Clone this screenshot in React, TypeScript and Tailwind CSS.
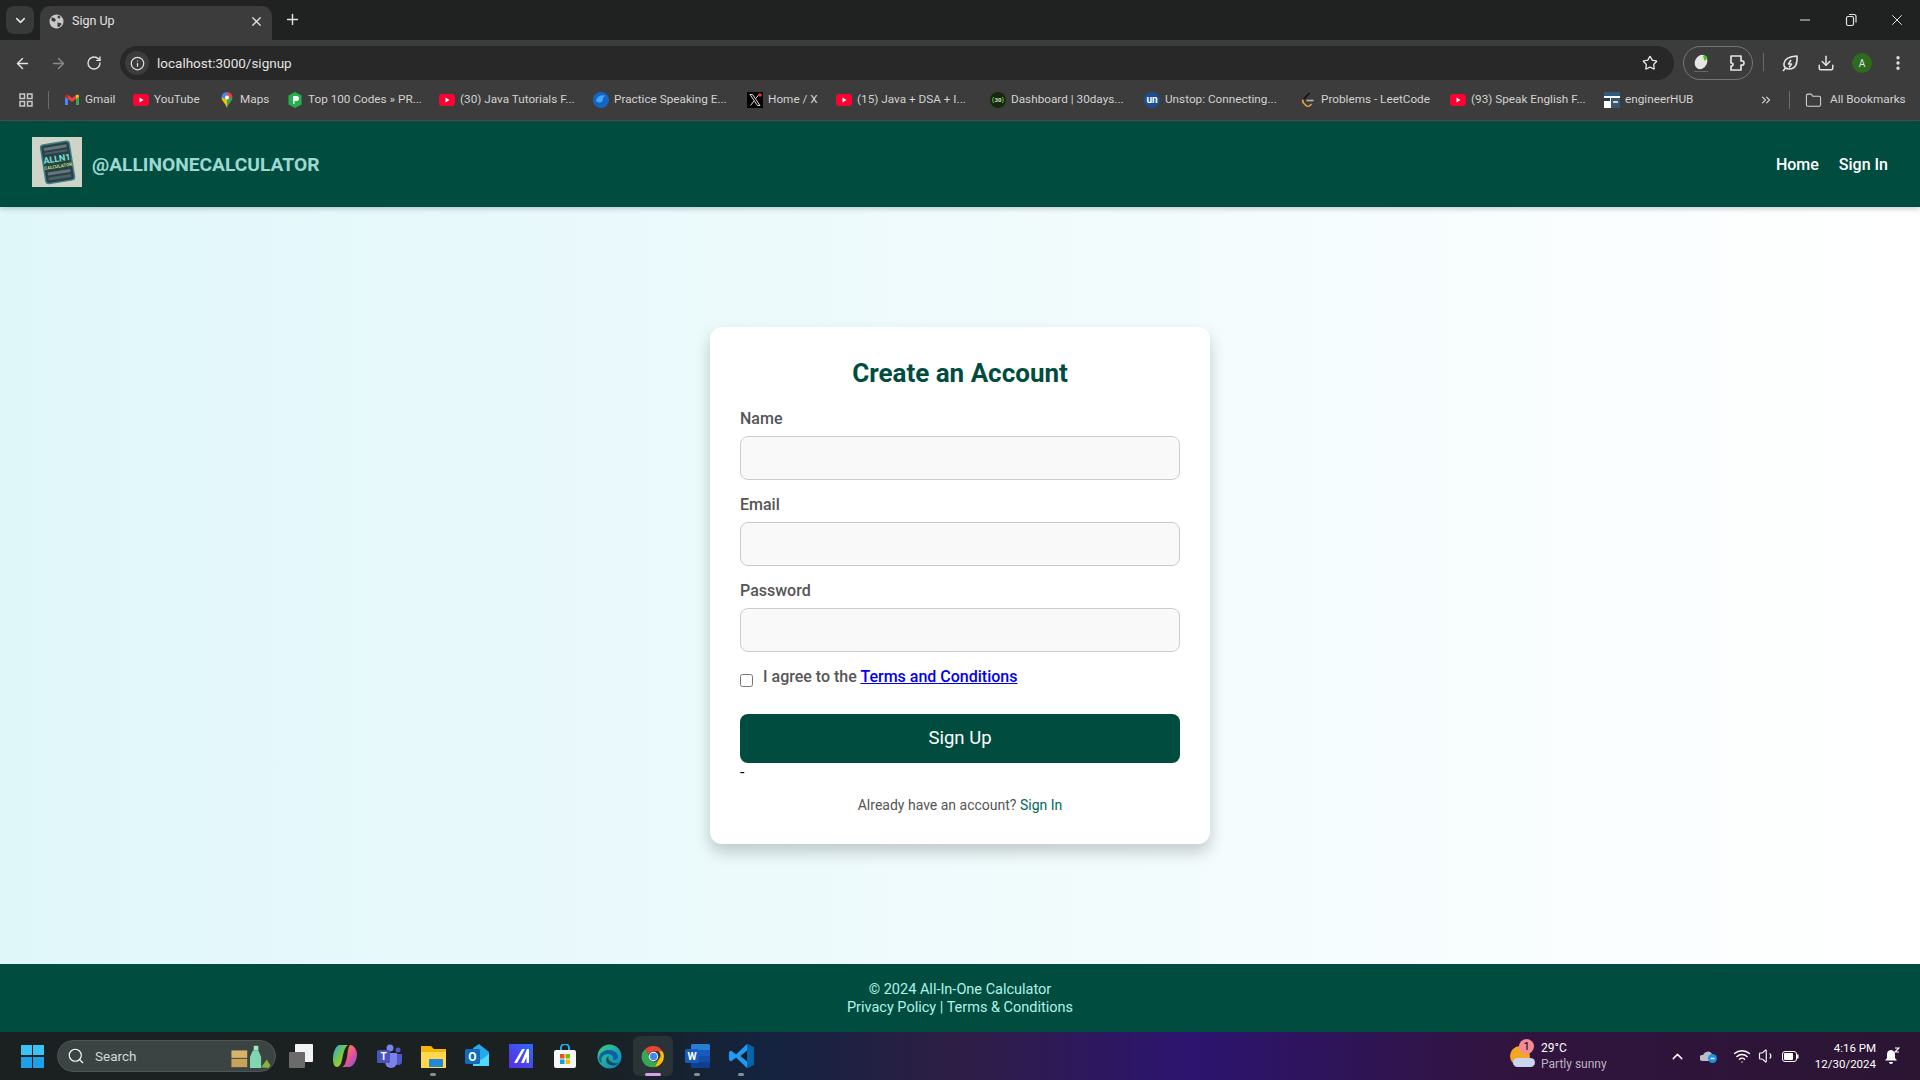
import {
  ArrowLeft,
  ArrowRight,
  ChevronDown,
  ChevronUp,
  ChevronsRight,
  Download,
  EllipsisVertical,
  Folder,
  Info,
  Minus,
  Plus,
  RotateCw,
  Search,
  Star,
  Volume1,
  Wifi,
  X,
} from "lucide-react"
import type { ReactNode } from "react"

function YouTubeIcon() {
  return (
    <svg width="16" height="16" viewBox="0 0 16 16">
      <rect x="0" y="2" width="16" height="12" rx="3" fill="#ff0033" />
      <path d="M6.500 5.600v4.800L10.500 8z" fill="#fff" />
    </svg>
  )
}

function GmailIcon() {
  return (
    <svg width="16" height="16" viewBox="0 0 16 16">
      <path d="M1 4v9h3V7z" fill="#4285f4" />
      <path d="M15 4v9h-3V7z" fill="#34a853" />
      <path d="M4 7l4 3 4-3V3L8 6 4 3z" fill="#ea4335" />
      <path d="M1 4c0-1.200 1.600-1.800 3-1v4L1 4.800z" fill="#c5221f" />
      <path d="M15 4c0-1.200-1.600-1.800-3-1v4l3-2.200z" fill="#fbbc04" />
    </svg>
  )
}

function MapsIcon() {
  return (
    <svg width="16" height="16" viewBox="0 0 16 16">
      <path d="M8 0a5.500 5.500 0 0 0-5.500 5.500L8 8z" fill="#4285f4" />
      <path d="M8 0a5.500 5.500 0 0 1 5.500 5.500L8 8z" fill="#ea4335" />
      <path d="M2.500 5.500C2.500 9 6.500 11 8 16l1-8z" fill="#fbbc04" />
      <path d="M13.500 5.500C13.500 9 9.500 11 8 16V6z" fill="#34a853" />
      <circle cx="8" cy="5.500" r="2" fill="#fff" />
    </svg>
  )
}

function TopCodesIcon() {
  return (
    <svg width="16" height="16" viewBox="0 0 16 16">
      <path d="M8 0l6.500 3.500v9L8 16l-6.500-3.500v-9z" fill="#22b14c" />
      <path d="M6 4h3.500a2.500 2.500 0 0 1 0 5H7.500v3H6z" fill="#fff" />
    </svg>
  )
}

function PracticeIcon() {
  return (
    <svg width="16" height="16" viewBox="0 0 16 16">
      <circle cx="8" cy="8" r="8" fill="#1565c0" />
      <path d="M3 9c1-5 6-7 10-5-2 0-3 1-3 3 0 3-3 5-7 2z" fill="#42a5f5" />
    </svg>
  )
}

function XIcon() {
  return (
    <svg width="16" height="16" viewBox="0 0 16 16">
      <rect width="16" height="16" fill="#000" />
      <path d="M3 2.500h2.500l7.500 11h-2.500zM12 2.500L8.700 6.500M7 9l-3.500 4.500" stroke="#ddd" strokeWidth="1" fill="none" />
      <circle cx="13" cy="3" r="1.800" fill="#e33" />
    </svg>
  )
}

function ThirtyDaysIcon() {
  return (
    <svg width="16" height="16" viewBox="0 0 16 16">
      <circle cx="8" cy="8" r="8" fill="#15290f" />
      <text x="8" y="10" fontSize="6" fontWeight="700" fill="#cde8c0" textAnchor="middle" fontFamily="Roboto">30</text>
      <path d="M3.500 5c-1 2-1 4 0 6M12.500 5c1 2 1 4 0 6" stroke="#6cc04a" fill="none" />
    </svg>
  )
}

function UnstopIcon() {
  return (
    <div className="flex h-4 w-4 items-center justify-center rounded-full bg-[#1f4e8c] text-[10px] font-bold leading-none text-white">
      un
    </div>
  )
}

function LeetCodeIcon() {
  return (
    <svg width="16" height="16" viewBox="0 0 16 16" fill="none">
      <path d="M3.500 7.500c-1 1.200-1 2.500 0 3.500l2.500 2.500c1 1 3 1 4 0l1.500-1.500" stroke="#e8a33d" strokeWidth="1.600" />
      <path d="M9.500 1L3.500 7.500" stroke="#111" strokeWidth="1.600" />
      <path d="M6.500 8.500h7" stroke="#b8b8b8" strokeWidth="1.600" />
    </svg>
  )
}

function EngineerHubIcon() {
  return (
    <svg width="16" height="16" viewBox="0 0 16 16">
      <rect width="16" height="16" fill="#fff" />
      <rect x="0" y="0" width="16" height="4" fill="#33597a" />
      <rect x="0" y="6" width="6" height="3" fill="#1d3a52" />
      <rect x="7" y="6" width="9" height="10" fill="#38566e" />
      <rect x="9" y="9" width="5" height="2" fill="#c7d3dc" />
    </svg>
  )
}

const bookmarks = [
  { icon: <GmailIcon />, label: "Gmail", width: "w-[69px]" },
  { icon: <YouTubeIcon />, label: "YouTube", width: "w-[86px]" },
  { icon: <MapsIcon />, label: "Maps", width: "w-[68px]" },
  { icon: <TopCodesIcon />, label: "Top 100 Codes » PR...", width: "w-[152px]" },
  { icon: <YouTubeIcon />, label: "(30) Java Tutorials F...", width: "w-[154px]" },
  { icon: <PracticeIcon />, label: "Practice Speaking E...", width: "w-[154px]" },
  { icon: <XIcon />, label: "Home / X", width: "w-[89px]" },
  { icon: <YouTubeIcon />, label: "(15) Java + DSA + I...", width: "w-[154px]" },
  { icon: <ThirtyDaysIcon />, label: "Dashboard | 30days...", width: "w-[154px]" },
  { icon: <UnstopIcon />, label: "Unstop: Connecting...", width: "w-[156px]" },
  { icon: <LeetCodeIcon />, label: "Problems - LeetCode", width: "w-[150px]" },
  { icon: <YouTubeIcon />, label: "(93) Speak English F...", width: "w-[154px]" },
  { icon: <EngineerHubIcon />, label: "engineerHUB", width: "w-[155px]" },
]

function BrowserChrome() {
  return (
    <div className="bg-[#3c3c3c] text-[#e3e3e3]">
      {/* tab strip */}
      <div className="flex h-10 items-end bg-[#202221] pl-1.5">
        <div className="mb-1.5 flex h-7 w-7 items-center justify-center rounded-lg bg-[#383a3a]">
          <ChevronDown size={15} strokeWidth={2.500} />
        </div>
        <div className="ml-1.5 flex h-[34px] w-[232px] items-center rounded-t-[10px] bg-[#3c3c3c] pb-1 pl-[9px] pr-2">
          <GlobeIcon />
          <span className="ml-2 flex-1 text-[12.500px]">Sign Up</span>
          <X size={15} strokeWidth={2} />
        </div>
        <div className="mb-[7px] ml-1.5 flex h-7 w-7 items-center justify-center">
          <Plus size={17} strokeWidth={2} />
        </div>
        <div className="ml-auto flex h-10 items-center">
          <div className="flex w-[46px] justify-center"><Minus size={16} strokeWidth={1.500} /></div>
          <div className="flex w-[46px] justify-center"><RestoreIcon /></div>
          <div className="flex w-[46px] justify-center"><X size={18} strokeWidth={1.300} /></div>
        </div>
      </div>

      {/* toolbar */}
      <div className="flex h-10 items-end pl-3.5 pr-3">
        <div className="flex h-[34px] items-center gap-[19px] text-[#e3e3e3]">
          <ArrowLeft size={17} strokeWidth={2} />
          <ArrowRight size={17} strokeWidth={2} className="text-[#8a8a8a]" />
          <RotateCw size={16} strokeWidth={2} />
        </div>
        <div className="ml-[18px] flex h-[34px] w-[1554px] items-center rounded-full bg-[#282828] pl-[5px] pr-4">
          <div className="flex h-6 w-6 items-center justify-center rounded-full bg-[#3c3c3c]">
            <Info size={15} />
          </div>
          <span className="ml-2 flex-1 text-[13.500px]">localhost:3000/signup</span>
          <Star size={16} strokeWidth={2} />
        </div>
        <div className="ml-[9px] flex h-[34px] w-[70px] items-center justify-between rounded-full border border-[#757575] pl-[9px] pr-1.5">
          <MouseIcon />
          <PuzzleIcon />
        </div>
        <div className="mb-[9px] ml-2.5 h-[18px] w-px bg-[#6a6a6a]" />
        <div className="flex h-[34px] items-center">
          <div className="ml-[17px]"><LeafIcon /></div>
          <Download size={18} strokeWidth={2} className="ml-[18px]" />
          <div className="ml-[17px] flex h-5 w-5 items-center justify-center rounded-full bg-[#2f6b1f] text-[10px]">A</div>
          <EllipsisVertical size={18} strokeWidth={2.500} className="ml-[17px]" />
        </div>
      </div>

      {/* bookmarks bar */}
      <div className="flex h-[41px] items-center border-b border-[#4d4d4d] pl-[19px] text-[11.750px] text-[#d2d2d2]">
        <AppsIcon />
        <div className="ml-[15px] mr-[15px] h-[18px] w-px bg-[#6a6a6a]" />
        {bookmarks.map((b) => (
          <div key={b.label + b.width} className={`flex items-center gap-[5px] ${b.width}`}>
            <span className="flex h-4 w-4 items-center justify-center">{b.icon}</span>
            <span className="whitespace-nowrap">{b.label}</span>
          </div>
        ))}
        <ChevronsRight size={14} />
        <div className="ml-[16px] mr-[15px] h-[18px] w-px bg-[#6a6a6a]" />
        <Folder size={17} strokeWidth={1.500} />
        <span className="ml-2 whitespace-nowrap">All Bookmarks</span>
      </div>
    </div>
  )
}

function GlobeIcon() {
  return (
    <svg width="15" height="15" viewBox="0 0 16 16">
      <circle cx="8" cy="8" r="7.500" fill="#c7c7c7" />
      <path d="M3 3.500l3 1 1.500 2-2 2-3-1.500zM9 9l3 .5 1.500 1-2.500 3.500-2-1zM9.500 1.500l3 1.500-1.500 2-2-1z" fill="#3c3c3c" />
    </svg>
  )
}

function RestoreIcon() {
  return (
    <svg width="14" height="14" viewBox="0 0 14 14" fill="none" stroke="#e3e3e3" strokeWidth="1.200">
      <rect x="2.500" y="3.500" width="7" height="9" rx="1.500" />
      <path d="M5 1.500h5a2 2 0 0 1 2 2v6" />
    </svg>
  )
}

function MouseIcon() {
  return (
    <svg width="18" height="20" viewBox="0 0 18 20">
      <ellipse cx="8" cy="9" rx="6" ry="7.500" transform="rotate(25 8 9)" fill="#e6e6e6" />
      <path d="M10 3c2-1 4 0 4.500 2l-3 3z" fill="#3ecb12" />
      <path d="M1 18.500h14" stroke="#666" />
    </svg>
  )
}

function PuzzleIcon() {
  return (
    <svg width="18" height="18" viewBox="0 0 18 18" fill="none" stroke="#e3e3e3" strokeWidth="1.700" strokeLinejoin="round">
      <path d="M3 2h10v5c2-.5 3 .5 3 2s-1 2.500-3 2v5H3v-4c1.500 0 2-1 2-1.500S4.500 9 3 9z" />
    </svg>
  )
}

function LeafIcon() {
  return (
    <svg width="18" height="18" viewBox="0 0 18 18" fill="none" stroke="#e3e3e3" strokeWidth="1.600" strokeLinejoin="round">
      <path d="M16 2c.5 7-1 13-8 13-3.500 0-5.500-2.500-5-5.500C3.500 5 9 2.500 16 2z" />
      <path d="M2 17l2.500-3M10 6L7.500 10h3l-2.500 3.500" />
    </svg>
  )
}

function AppsIcon() {
  return (
    <svg width="14" height="14" viewBox="0 0 14 14" fill="none" stroke="#c7c7c7" strokeWidth="1.500">
      <rect x="1" y="1" width="4.500" height="4.500" />
      <rect x="8.500" y="1" width="4.500" height="4.500" />
      <rect x="1" y="8.500" width="4.500" height="4.500" />
      <rect x="8.500" y="8.500" width="4.500" height="4.500" />
    </svg>
  )
}

function Logo() {
  return (
    <svg width="50" height="50" viewBox="0 0 50 50" className="mb-1 shrink-0">
      <rect width="50" height="50" fill="#cfd4c8" />
      <g transform="rotate(-9 25 25)">
        <rect x="11" y="6" width="29" height="39" rx="3" fill="#2a3f46" stroke="#3e7f8a" strokeWidth="1.500" />
        <rect x="14" y="9" width="23" height="3" fill="#62787c" />
        <rect x="14" y="14" width="23" height="2" fill="#4b6064" />
        <text x="25.500" y="25" fontSize="9" fontWeight="700" fill="#6fe7d2" textAnchor="middle" fontFamily="Roboto">ALLN1</text>
        <text x="25.500" y="31" fontSize="4.500" fontWeight="700" fill="#b9e37a" textAnchor="middle" fontFamily="Roboto">CALCULATOR</text>
        <rect x="14" y="34" width="23" height="3" fill="#62787c" />
        <rect x="14" y="39" width="23" height="3" fill="#4b6064" />
      </g>
    </svg>
  )
}

function TaskIcon({ children, dot }: { children: ReactNode; dot?: boolean }) {
  return (
    <div className="relative flex h-10 w-11 items-center justify-center">
      {children}
      {dot && <div className="absolute bottom-0 h-[3px] w-[6px] rounded-full bg-[#8a8f92]" />}
    </div>
  )
}

function Taskbar() {
  return (
    <div className="flex h-12 items-center bg-[linear-gradient(90deg,#1b2120_0%,#1b2120_30%,#14233f_40%,#2e1e45_50%,#2c1470_62%,#31143f_78%,#2b1533_100%)] text-white">
      <div className="ml-[21px] grid h-[23px] w-[23px] grid-cols-2 gap-[1.500px]">
        <div className="bg-[#3cc3f5]" />
        <div className="bg-[#3cc3f5]" />
        <div className="bg-[#1e9fe8]" />
        <div className="bg-[#1e9fe8]" />
      </div>
      <div className="ml-[13px] flex h-8 w-[219px] items-center rounded-full border border-[#4d5655] bg-[#3b4443] pl-[9px] pr-[2px]">
        <Search size={18} strokeWidth={1.500} />
        <span className="ml-2.5 flex-1 text-[13.500px] text-[#d5d8d8]">Search</span>
        <svg width="46" height="26" viewBox="0 0 48 28">
          <rect x="4" y="8" width="17" height="8" fill="#d7b46a" />
          <rect x="4" y="17" width="17" height="9" fill="#c9a257" />
          <path d="M27 8h6l3 7v12H24V15z" fill="#7fd6b0" />
          <rect x="28" y="3" width="5" height="5" fill="#a5e6c9" />
          <path d="M36 26l6-8 4 6-2 3z" fill="#8bb23a" />
        </svg>
      </div>
      <div className="ml-[3px] flex items-center">
        <TaskIcon>
          <svg width="24" height="24" viewBox="0 0 24 24">
            <rect x="6" y="0" width="18" height="18" rx="1" fill="#f2f2f2" />
            <rect x="0" y="8" width="16" height="16" rx="1" fill="#6b6b6b" />
          </svg>
        </TaskIcon>
        <TaskIcon>
          <svg width="24" height="24" viewBox="0 0 24 24">
            <defs>
              <linearGradient id="cp1" x1="0" y1="0" x2="1" y2="1">
                <stop offset="0" stopColor="#2aa7e0" />
                <stop offset="0.500" stopColor="#7ac943" />
                <stop offset="1" stopColor="#f7c600" />
              </linearGradient>
              <linearGradient id="cp2" x1="0" y1="0" x2="1" y2="1">
                <stop offset="0" stopColor="#f7a700" />
                <stop offset="0.500" stopColor="#f0568c" />
                <stop offset="1" stopColor="#7a4de0" />
              </linearGradient>
            </defs>
            <path d="M7 1h8c-3 2-4 6-5 10-1 5-2 12-6 12-3 0-4-4-4-8C0 8 3 1 7 1z" fill="url(#cp1)" />
            <path d="M17 1c4 0 7 5 7 9 0 7-4 13-8 13H9c3-1 4-5 5-10 1-5 1-10 3-12z" fill="url(#cp2)" />
          </svg>
        </TaskIcon>
        <TaskIcon>
          <svg width="25" height="24" viewBox="0 0 25 24">
            <circle cx="13" cy="4" r="3.500" fill="#7b83eb" />
            <circle cx="21" cy="6" r="2.500" fill="#5059c9" />
            <path d="M17 10h8v7a4 4 0 0 1-8 0z" fill="#5059c9" />
            <path d="M8 9h12v9a6 6 0 0 1-12 0z" fill="#7b83eb" />
            <rect x="0" y="6" width="13" height="13" rx="1.500" fill="#4b53bc" />
            <text x="6.500" y="16" fontSize="10" fontWeight="700" fill="#fff" textAnchor="middle" fontFamily="Roboto">T</text>
          </svg>
        </TaskIcon>
        <TaskIcon dot>
          <svg width="25" height="24" viewBox="0 0 25 24">
            <path d="M0 2h10l3 3h12v19H0z" fill="#f6b40e" />
            <path d="M0 8h25v16H0z" fill="#ffd84d" />
            <rect x="8" y="15" width="14" height="8" rx="1" fill="#1f88d9" />
          </svg>
        </TaskIcon>
        <TaskIcon>
          <svg width="24" height="24" viewBox="0 0 24 24">
            <path d="M14 0l10 8v11a3 3 0 0 1-3 3H8V4z" fill="#28a8ea" />
            <path d="M8 10l8 6 8-6v12H8z" fill="#50d9ff" />
            <rect x="0" y="5" width="15" height="15" rx="1.500" fill="#0f6cbd" />
            <text x="7.500" y="17" fontSize="12" fontWeight="700" fill="#fff" textAnchor="middle" fontFamily="Roboto">O</text>
          </svg>
        </TaskIcon>
        <TaskIcon>
          <svg width="24" height="24" viewBox="0 0 24 24">
            <defs>
              <linearGradient id="ms" x1="0" y1="1" x2="1" y2="0">
                <stop offset="0" stopColor="#5b2be0" />
                <stop offset="1" stopColor="#2d6bff" />
              </linearGradient>
            </defs>
            <rect width="24" height="24" fill="url(#ms)" />
            <path d="M5 19L13 5h3l-8 14zM12 19l6-14h2v14h-2.500v-6L15 19z" fill="#fff" />
          </svg>
        </TaskIcon>
        <TaskIcon>
          <svg width="24" height="24" viewBox="0 0 24 24">
            <path d="M8 6V4a4 4 0 0 1 8 0v2" fill="none" stroke="#28a8ea" strokeWidth="2" />
            <rect x="1" y="6" width="22" height="18" rx="2" fill="#f7f7f7" />
            <rect x="7" y="10" width="4.500" height="4.500" fill="#f25022" />
            <rect x="12.500" y="10" width="4.500" height="4.500" fill="#7fba00" />
            <rect x="7" y="15.500" width="4.500" height="4.500" fill="#00a4ef" />
            <rect x="12.500" y="15.500" width="4.500" height="4.500" fill="#ffb900" />
          </svg>
        </TaskIcon>
        <TaskIcon>
          <svg width="25" height="25" viewBox="0 0 25 25">
            <defs>
              <linearGradient id="edge" x1="0" y1="0" x2="1" y2="1">
                <stop offset="0" stopColor="#39d17c" />
                <stop offset="1" stopColor="#0a7fd0" />
              </linearGradient>
            </defs>
            <circle cx="12.500" cy="12.500" r="12" fill="url(#edge)" />
            <path d="M2 15C2 8 8 6 12 6c5 0 9 3 9 7 0 2-2 3-5 3 1-3-1-6-5-6-5 0-8 4-6 9-2-1-3-2-3-4z" fill="#0f5fa8" />
            <path d="M12 12c-3 1-4 5-1 8 3 2 8 2 11-1-3 1-8 0-10-3-1-2-1-3 0-4z" fill="#1b1f24" opacity="0.650" />
          </svg>
        </TaskIcon>
        <div className="relative mx-0.5 flex h-10 w-10 items-center justify-center rounded-md bg-[#2a3336]">
          <svg width="25" height="25" viewBox="0 0 48 48">
            <path d="M24 4a20 20 0 0 1 17.300 10H24a10 10 0 0 0-9.500 7L8 9.500A20 20 0 0 1 24 4z" fill="#ea4335" />
            <path d="M41.300 14A20 20 0 0 1 26 44l8.500-15a10 10 0 0 0-1-15z" fill="#fbbc04" />
            <path d="M26 44A20 20 0 0 1 8 9.500L16 24a10 10 0 0 0 18.500 5z" fill="#34a853" />
            <circle cx="24" cy="24" r="9" fill="#fff" />
            <circle cx="24" cy="24" r="7" fill="#4285f4" />
          </svg>
          <div className="absolute bottom-0 h-[3px] w-4 rounded-full bg-[#d9a0e8]" />
        </div>
        <TaskIcon dot>
          <svg width="25" height="24" viewBox="0 0 25 24">
            <rect x="6" y="0" width="19" height="24" rx="1.500" fill="#2b7cd3" />
            <rect x="6" y="6" width="19" height="6" fill="#185abd" />
            <rect x="6" y="12" width="19" height="6" fill="#124ea3" />
            <rect x="6" y="18" width="19" height="6" fill="#103f91" />
            <rect x="0" y="5" width="14" height="14" rx="1.500" fill="#185abd" />
            <text x="7" y="16" fontSize="10.500" fontWeight="700" fill="#fff" textAnchor="middle" fontFamily="Roboto">W</text>
          </svg>
        </TaskIcon>
        <TaskIcon dot>
          <svg width="25" height="24" viewBox="0 0 25 24">
            <path d="M18 0l7 3.500v17L18 24 7 13.500 2 17.500 0 16V8l2-1.500 5 4z" fill="#1f9cf0" />
            <path d="M18 6.500L11.500 12l6.500 5.500z" fill="#0b1a2a" />
            <path d="M18 0l7 3.500v17L18 24z" fill="#0065a9" />
          </svg>
        </TaskIcon>
      </div>

      <div className="ml-auto flex items-center">
        <div className="relative h-[26px] w-[26px]">
          <div className="absolute left-0 top-[3px] h-[20px] w-[20px] rounded-full bg-[#f5a524]" />
          <div className="absolute bottom-[2px] left-[3px] h-[9px] w-[22px] rounded-full bg-[#c9d6ee]" />
          <div className="absolute -top-[4px] left-[9px] flex h-[15px] w-[15px] items-center justify-center rounded-full bg-[#f28b95] text-[11px] leading-none text-black">1</div>
        </div>
        <div className="ml-[5px] w-[100px] text-[12px] leading-4">
          <div>29°C</div>
          <div className="text-[#b9b3c0]">Partly sunny</div>
        </div>
        <ChevronUp size={17} strokeWidth={2} className="ml-7" />
        <svg width="18" height="14" viewBox="0 0 18 14" className="ml-3.5">
          <path d="M2 12a3 3 0 0 1 1-6 5 5 0 0 1 9-1 4 4 0 0 1 3 4v3z" fill="#b9bec4" />
          <circle cx="12.500" cy="9.500" r="4.500" fill="#1d8fe1" />
          <path d="M10.500 9.500h4" stroke="#fff" strokeWidth="1.500" />
        </svg>
        <Wifi size={18} strokeWidth={1.800} className="ml-[15px]" />
        <Volume1 size={18} strokeWidth={1.500} className="ml-[7px]" />
        <svg width="17" height="11" viewBox="0 0 17 11" fill="none" className="ml-1.5">
          <rect x="0.500" y="0.500" width="14" height="10" rx="2.500" stroke="#fff" />
          <rect x="2" y="2" width="9" height="7" rx="1" fill="#fff" />
          <rect x="15" y="3.500" width="1.500" height="4" fill="#fff" />
        </svg>
        <div className="ml-[7px] w-[70px] text-right text-[11.500px] leading-4">
          <div>4:16 PM</div>
          <div>12/30/2024</div>
        </div>
        <svg width="16" height="18" viewBox="0 0 16 18" className="ml-2 mr-5">
          <path d="M7 3a4.500 4.500 0 0 0-4 4.500V11l-2 2.500h12L11 11V8a4.500 4.500 0 0 0-4-5z" fill="#fff" />
          <path d="M5 15h4a2 2 0 0 1-4 0z" fill="#fff" />
          <path d="M11 1h4l-4 4h4" stroke="#fff" strokeWidth="1.200" fill="none" />
        </svg>
      </div>
    </div>
  )
}

export default function App() {
  return (
    <div className="flex h-[1080px] w-[1920px] flex-col overflow-hidden font-['Roboto',sans-serif]">
      <BrowserChrome />

      <header className="relative z-10 flex h-[86px] items-center justify-between bg-[#004d40] px-8 shadow-[0_2px_5px_rgba(0,0,0,0.2)]">
        <div className="flex items-center gap-2.5">
          <Logo />
          <span className="pt-[3px] text-[19.200px] font-bold text-[#9ed8d3]">@ALLINONECALCULATOR</span>
        </div>
        <nav className="flex gap-5 pt-px text-[16px] font-medium text-white">
          <a>Home</a>
          <a>Sign In</a>
        </nav>
      </header>

      <main className="flex flex-1 items-center justify-center bg-gradient-to-r from-[#e0f7fa] to-white">
        <div className="w-[500px] rounded-xl bg-white px-[30px] pb-[29px] pt-[30px] shadow-[0_8px_16px_rgba(0,0,0,0.2)]">
          <h2 className="text-center text-[26px] font-bold leading-[32px] text-[#004d40]">Create an Account</h2>
          <form className="mt-5">
            {["Name", "Email", "Password"].map((label) => (
              <div key={label} className="mb-[15px]">
                <label className="mb-2 block text-[16px] font-medium leading-[19px] text-[#555]">{label}</label>
                <input className="block h-11 w-full rounded-lg border border-[#ccc] bg-[#f9f9f9]" />
              </div>
            ))}
            <div className="flex items-start">
              <input type="checkbox" className="mt-[7px] h-[13px] w-[13px]" />
              <span className="ml-[10px] text-[16px] font-medium leading-[19px] text-[#555]">
                I agree to the <a className="text-[#0000ee] underline">Terms and Conditions</a>
              </span>
            </div>
            <button className="mt-[27px] block h-[49px] w-full rounded-lg bg-[#004d40] text-[18.500px] font-normal text-white">Sign Up</button>
            <div className="text-[16px] leading-[20px] text-black">-</div>
          </form>
          <p className="mt-[12px] text-center text-[14px] leading-[20px] text-[#555]">
            Already have an account? <a className="text-[#00695c]">Sign In</a>
          </p>
        </div>
      </main>

      <footer className="flex h-[68px] flex-col items-center justify-center bg-[#004d40] pt-0.5 text-[14.500px] leading-[18px] text-[#b2f2e8]">
        <p>© 2024 All-In-One Calculator</p>
        <p>Privacy Policy | Terms &amp; Conditions</p>
      </footer>

      <Taskbar />
    </div>
  )
}
